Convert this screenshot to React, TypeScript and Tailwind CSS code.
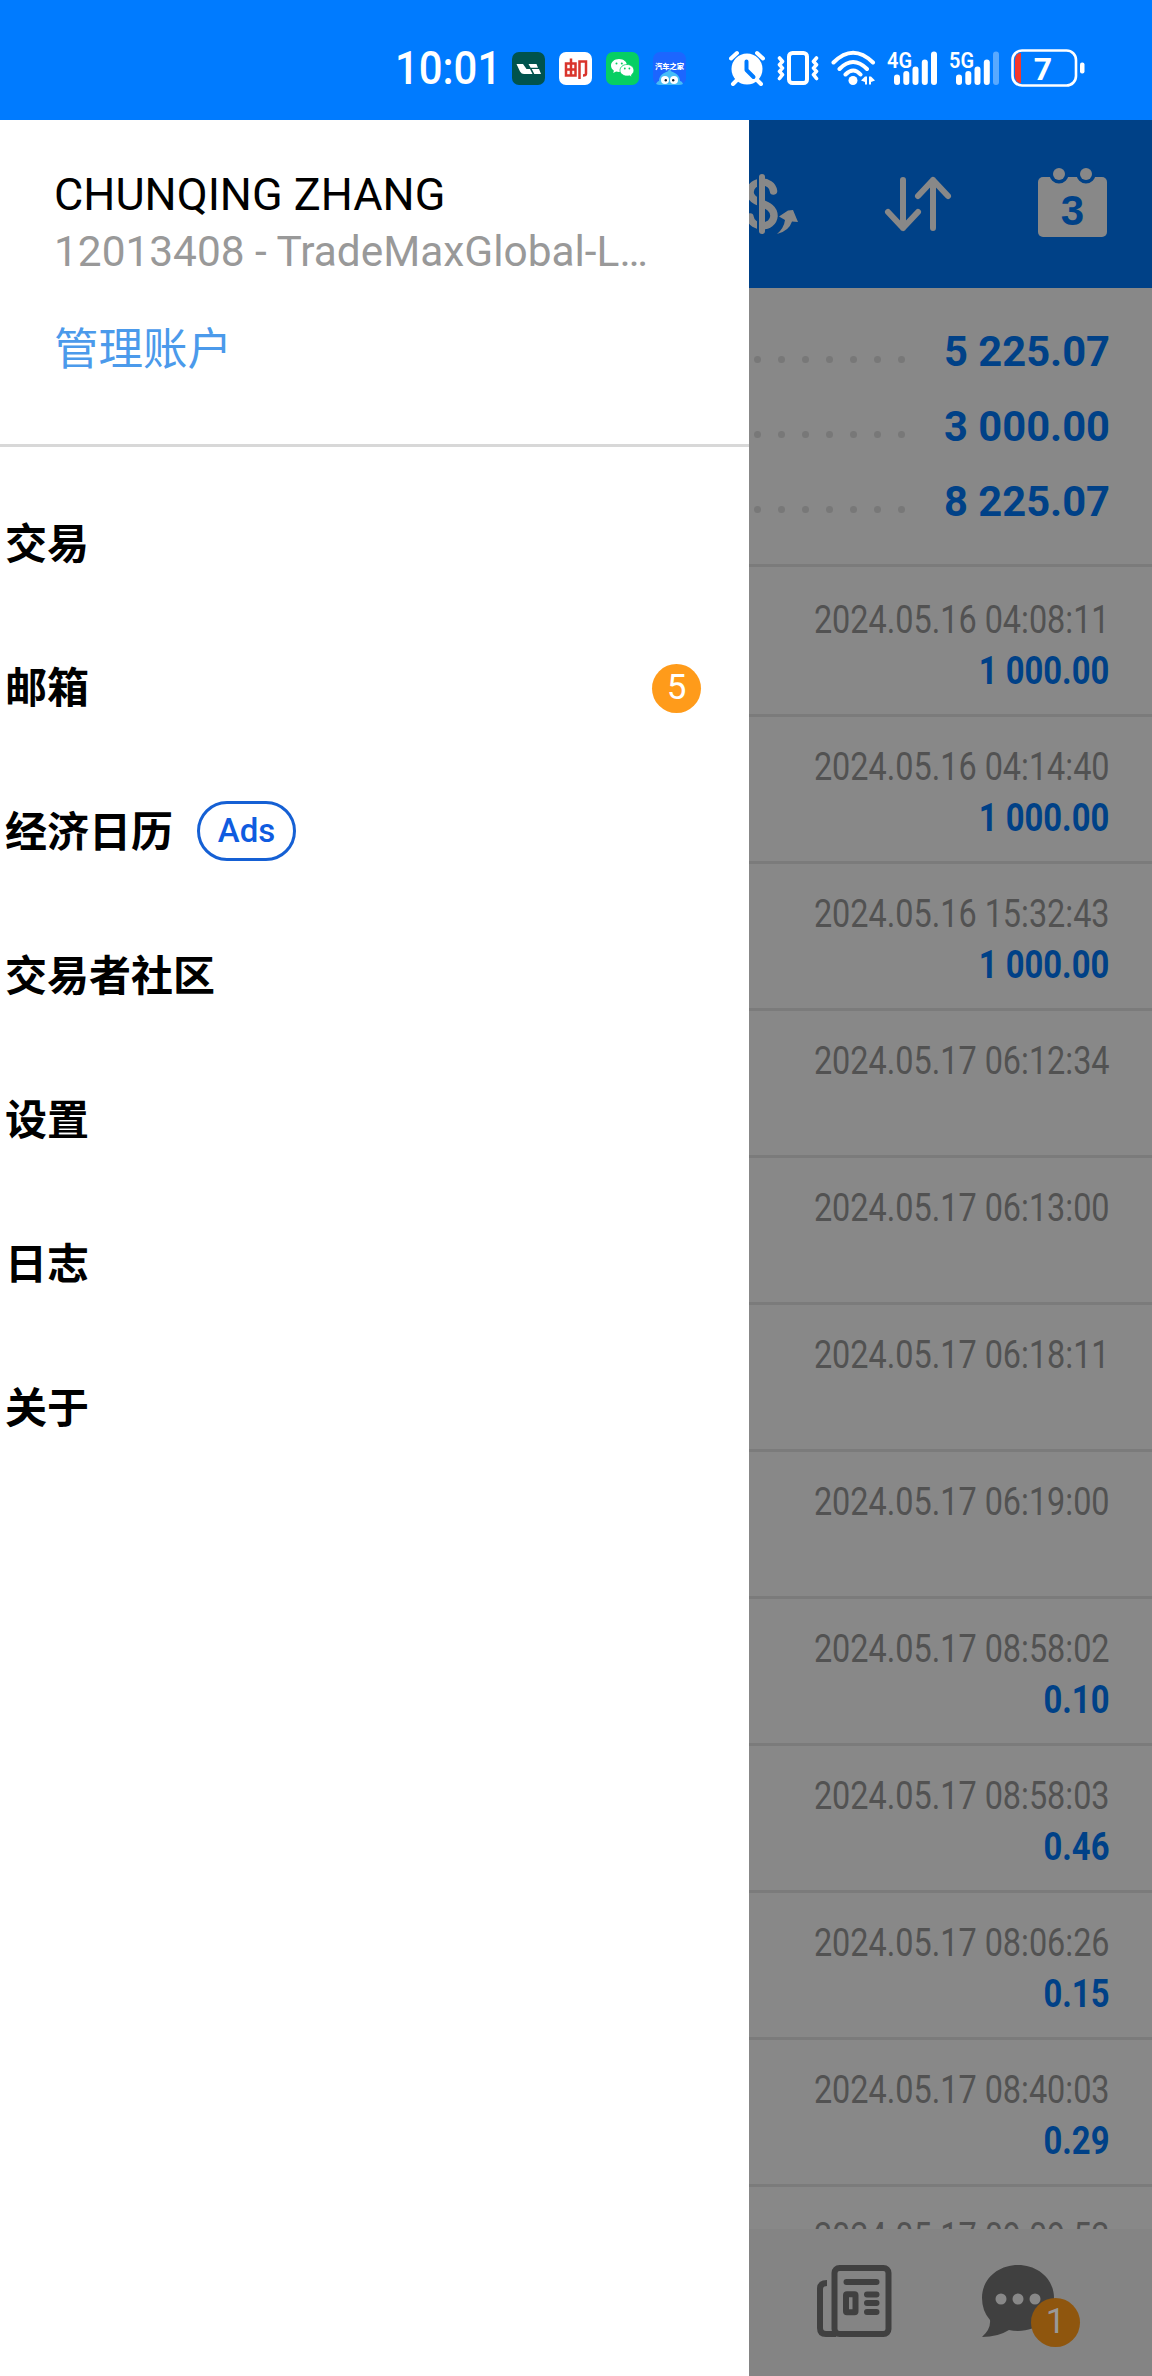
import type { ReactNode } from 'react'

const SUMMARY = ['5 225.07', '3 000.00', '8 225.07']

const HISTORY = [
  { time: '2024.05.16 04:08:11', amount: '1 000.00' },
  { time: '2024.05.16 04:14:40', amount: '1 000.00' },
  { time: '2024.05.16 15:32:43', amount: '1 000.00' },
  { time: '2024.05.17 06:12:34' },
  { time: '2024.05.17 06:13:00' },
  { time: '2024.05.17 06:18:11' },
  { time: '2024.05.17 06:19:00' },
  { time: '2024.05.17 08:58:02', amount: '0.10' },
  { time: '2024.05.17 08:58:03', amount: '0.46' },
  { time: '2024.05.17 08:06:26', amount: '0.15' },
  { time: '2024.05.17 08:40:03', amount: '0.29' },
  { time: '2024.05.17 09:09:52' },
]

const MENU: { label: string; extra?: ReactNode }[] = [
  { label: '交易' },
  {
    label: '邮箱',
    extra: (
      <span className="mt-0.5 mr-12 ml-auto flex size-[49px] items-center justify-center rounded-full bg-[#ff9b1a] font-['Roboto',sans-serif] text-[35px] font-normal text-white">
        5
      </span>
    ),
  },
  {
    label: '经济日历',
    extra: (
      <span className="ml-6 flex h-[60px] w-[99px] items-center justify-center rounded-full border-3 border-[#1560d4] font-['Roboto',sans-serif] text-[33px] font-medium text-[#0f5ce0]">
        Ads
      </span>
    ),
  },
  { label: '交易者社区' },
  { label: '设置' },
  { label: '日志' },
  { label: '关于' },
]

function AppIcons() {
  return (
    <div className="ml-[17px] flex gap-[14px]">
      {/* Li Auto */}
      <svg width="33" height="33" viewBox="0 0 33 33">
        <rect width="33" height="33" rx="7" fill="#00534d" />
        <path d="M4.500 12H11l3.500 5H18l2.500 5h-8.500q-2.500 0-4-2.500z" fill="#fff" />
        <path d="M16.500 12h8l1.500 3.800h-7.300z M19.800 17h7.200l2 5h-6.700z" fill="#fff" />
      </svg>
      {/* Postal savings */}
      <svg width="33" height="33" viewBox="0 0 33 33">
        <rect width="33" height="33" rx="7" fill="#fff" />
        <path d="M7 11.500h9.500v12H7zM12 6.500v17M7 17.500h9.500M20.500 27V9.500h6.500v12q0 2-3 2" fill="none" stroke="#d9342b" strokeWidth="2.500" />
      </svg>
      {/* WeChat */}
      <svg width="33" height="33" viewBox="0 0 33 33">
        <rect width="33" height="33" rx="7" fill="#06cf63" />
        <path d="M13 7c-4.600 0-8 2.900-8 6.600 0 2.100 1.100 3.900 2.900 5.100l-.7 2.400 2.900-1.500q1.400.4 2.900.4c4.600 0 8-2.900 8-6.500S17.600 7 13 7z" fill="#fff" />
        <path d="M21 12.500c-4 0-7 2.600-7 5.800s3 5.800 7 5.800q1.300 0 2.400-.3l2.500 1.300-.6-2.100c1.600-1.100 2.600-2.800 2.600-4.700 0-3.200-3-5.800-6.900-5.800z" fill="#fff" stroke="#06cf63" strokeWidth=".8" />
        <circle cx="10.500" cy="11.500" r="1" fill="#06cf63" />
        <circle cx="15.800" cy="11.500" r="1" fill="#06cf63" />
        <circle cx="18.800" cy="16.500" r=".9" fill="#06cf63" />
        <circle cx="23.400" cy="16.500" r=".9" fill="#06cf63" />
      </svg>
      {/* Autohome */}
      <svg className="overflow-visible" width="33" height="33" viewBox="0 0 33 33">
        <rect width="33" height="33" rx="7" fill="#1c66ff" />
        <text x="16.500" y="16.500" textAnchor="middle" fontSize="7.300" fontWeight="900" fill="#fff" fontFamily="Noto Sans CJK SC, sans-serif">
          汽车之家
        </text>
        <path d="M3 32c1-2 2-3 3-3 0-6 5-8 8.500-9.500L16.500 17l2 2.500C22 21 27 23 27 29c1 0 2.500 1 3 3q-2 1-4 1H7q-2 0-4-1z" fill="#45bdf7" />
        <circle cx="12" cy="28" r="4" fill="#fff" />
        <circle cx="21" cy="28" r="4" fill="#fff" />
        <circle cx="12.800" cy="28.300" r="1.200" fill="#123" />
        <circle cx="20.200" cy="28.300" r="1.200" fill="#123" />
      </svg>
    </div>
  )
}

function Signal({ label, weak }: { label: string; weak?: boolean }) {
  return (
    <svg className="overflow-visible" width="50" height="36" viewBox="0 0 50 36" fill="#fff">
      <text x="0" y="17.500" fontSize="22.500" fontWeight="600" textLength="25" lengthAdjust="spacingAndGlyphs" fontFamily="Roboto, sans-serif">
        {label}
      </text>
      <rect x="7" y="24.500" width="6" height="10.500" rx="3" />
      <rect x="16.300" y="21" width="6" height="14" rx="3" />
      <rect x="25.500" y="16.500" width="6" height="18.500" rx="3" />
      <rect x="34.800" y="9.500" width="6" height="25.500" rx="3" />
      <rect x="44" y="1.500" width="6" height="33.500" rx="3" opacity={weak ? 0.35 : 1} />
    </svg>
  )
}

function StatusIcons() {
  return (
    <div className="flex items-center">
      {/* Alarm */}
      <svg className="ml-[43px]" width="36" height="36" viewBox="0 0 36 36">
        <circle cx="18" cy="19" r="15.500" fill="#fff" />
        <path d="M2 8.500 8 3M34 8.500 28 3M8 30l-4 4M28 30l4 4" stroke="#fff" strokeWidth="4" strokeLinecap="round" />
        <path d="M17.500 11.500v8.500l7 7" stroke="#007bff" strokeWidth="4" strokeLinecap="round" strokeLinejoin="round" fill="none" />
      </svg>
      {/* Vibrate */}
      <svg className="ml-3" width="42" height="36" viewBox="0 0 42 36" fill="none" stroke="#fff" strokeLinecap="round" strokeLinejoin="round">
        <rect x="12" y="3" width="18" height="30" rx="3.500" strokeWidth="4" />
        <path d="m2.500 8 3 3.500-3 3.300 3 3.300-3 3.300 3 3.300-3 3.800M39.500 8l-3 3.500 3 3.300-3 3.300 3 3.300-3 3.300 3 3.800" strokeWidth="3.600" />
      </svg>
      {/* Wi-Fi */}
      <svg className="ml-3" width="45" height="36" viewBox="0 0 45 36" fill="none" stroke="#fff" strokeWidth="4" strokeLinecap="round">
        <path d="M2.500 12.500Q22-7 42 12.500M8.500 19Q22 5 36 19M14.500 24.500q8-8 15 0" />
        <circle cx="22" cy="30.500" r="4.500" fill="#fff" stroke="none" />
        <path d="M36 26.500v8h-2v-2.500l-4-1.500 4-4zM38 26.500v8h2v-2.500l4-1.500-4-4z" fill="#fff" stroke="none" />
      </svg>
      <div className="ml-[11px] flex gap-3">
        <Signal label="4G" />
        <Signal label="5G" weak />
      </div>
      {/* Battery */}
      <svg className="ml-3" width="74" height="38" viewBox="0 0 74 38">
        <path d="M10 4v30Q4 34 4 26V12Q4 4 10 4z" fill="#f5382b" />
        <rect x="1.500" y="1.500" width="63.500" height="35" rx="9.500" fill="none" stroke="#fff" strokeWidth="2.600" />
        <rect x="69" y="13.500" width="4.500" height="11" rx="2" fill="#fff" />
        <text x="32" y="30.500" textAnchor="middle" fontSize="32" fontWeight="700" fill="#fff" fontFamily="Roboto, sans-serif">
          7
        </text>
      </svg>
    </div>
  )
}

function StatusBar() {
  return (
    <header className="flex h-[120px] shrink-0 items-center bg-[#007bff] pt-4 pl-[395px] text-white">
      <div className="flex items-center">
        <span className="w-[100px] origin-left scale-x-91 text-[46px] leading-[34px] font-medium">10:01</span>
        <AppIcons />
        <StatusIcons />
      </div>
    </header>
  )
}

function Drawer() {
  return (
    <aside className="w-[749px] shrink-0 bg-white">
      <div className="h-[327px] border-b-3 border-[#d8d8d8] pt-[48px] pl-[54px]">
        <p className="text-[45px] leading-[54px] whitespace-nowrap text-black">CHUNQING ZHANG</p>
        <p className="mt-px text-[42.400px] leading-[58px] whitespace-nowrap text-[#999]">12013408 - TradeMaxGlobal-L…</p>
        <p className="mt-[35px] font-['Noto_Sans_CJK_SC',sans-serif] text-[44.500px] leading-[60px] text-[#4b9aeb]">管理账户</p>
      </div>
      <nav className="pt-6">
        {MENU.map((item) => (
          <div
            key={item.label}
            className="flex h-36 items-center pl-[5px] font-['Noto_Sans_CJK_SC',sans-serif] text-[42px] font-bold text-black"
          >
            <span className="pb-1.5">{item.label}</span>
            {item.extra}
          </div>
        ))}
      </nav>
    </aside>
  )
}

function Toolbar() {
  return (
    <div className="flex h-[168px] shrink-0 bg-[#004187] pt-12">
      {/* Currency */}
      <svg width="50" height="72" viewBox="0 0 50 72" fill="none" stroke="#888" strokeLinecap="round">
        <path d="M24.500 23C23 11 2 11 1 24c0 13 24 9 24 24C24 61 3 61 1 49" strokeWidth="7.500" />
        <path d="M12 9v54" stroke="#004187" strokeWidth="8" strokeLinecap="butt" />
        <path d="M13 9v54" strokeWidth="6" />
        <path d="M30 48.500l9-6 5-.5 5 12-6-.5Q40 63 28 66q7-6 8-14z" fill="#888" stroke="none" />
      </svg>
      {/* Sort */}
      <svg className="ml-[83px]" width="74" height="72" viewBox="0 0 74 72" fill="none" stroke="#888" strokeWidth="6" strokeLinecap="round" strokeLinejoin="round">
        <path d="M21 12v48M6 44l15 16 15-16M51 60V12M36 28l15-16 15 16" />
      </svg>
      {/* Calendar */}
      <svg className="ml-[82px]" width="69" height="72" viewBox="0 0 69 72">
        <rect y="9" width="69" height="60" rx="5" fill="#888" />
        <path d="M21 6v0M48 6v0" stroke="#004187" strokeWidth="19" strokeLinecap="round" />
        <circle cx="21" cy="6" r="6" fill="#888" />
        <circle cx="48" cy="6" r="6" fill="#888" />
        <text x="34.500" y="57" textAnchor="middle" fontSize="42" fontWeight="700" fill="#004187" fontFamily="Liberation Sans, sans-serif">
          3
        </text>
      </svg>
    </div>
  )
}

function TabBar() {
  return (
    <div className="flex h-[147px] shrink-0 bg-[#848484] pt-9 pl-[67px]">
      {/* News */}
      <svg width="76" height="72" viewBox="0 0 76 72" fill="none" stroke="#404040" strokeWidth="6" strokeLinecap="round">
        <rect x="18.500" y="3" width="54" height="66" rx="5" />
        <path d="M11 18q-7 0-7 6v39q0 6 6 6h10" strokeLinecap="butt" />
        <path d="M30.500 17h30M51 29.500h9.500M51 38h9.500M51 47h9.500" />
        <rect x="30" y="29.300" width="9.500" height="18" rx="1" />
      </svg>
      {/* Messages */}
      <div className="relative ml-[90px] h-[72px] w-[72px]">
        <svg width="72" height="72" viewBox="0 0 72 72" fill="#404040">
          <path d="M36 0c20 0 36 14 36 33S56 66 36 66q-5 0-9-1-11 7-27 7 9-8 8-17Q0 46 0 33C0 14 16 0 36 0z" />
          <circle cx="19" cy="34" r="5.500" fill="#888" />
          <circle cx="36" cy="34" r="5.500" fill="#888" />
          <circle cx="53" cy="34" r="5.500" fill="#888" />
        </svg>
        <span className="absolute top-[33px] left-[49px] flex size-[49px] items-center justify-center rounded-full bg-[#8f560e] text-[35px] text-[#999]">
          1
        </span>
      </div>
    </div>
  )
}

function HistoryPane() {
  return (
    <main className="flex min-w-0 flex-1 flex-col bg-[#888]">
      <Toolbar />
      <div className="h-[279px] shrink-0 border-b-3 border-[#7b7b7b] pt-[27px] pr-[42px]">
        {SUMMARY.map((value) => (
          <div key={value} className="flex h-[75px] items-center">
            <div className="mt-3.5 ml-[5px] flex gap-[17px]">
              {Array.from({ length: 7 }, (_, i) => (
                <i key={i} className="size-[7px] rounded-full bg-[#787878]" />
              ))}
            </div>
            <span className="ml-auto text-[41.700px] font-bold whitespace-nowrap text-[#004187]">{value}</span>
          </div>
        ))}
      </div>
      <div className="min-h-0 flex-1 overflow-hidden pt-[3px]">
        {HISTORY.map((row) => (
          <div
            key={row.time}
            className="flex h-[147px] flex-col items-end border-b-3 border-[#7b7b7b] pt-[25px] pr-[42px] text-[39.500px] leading-[50px] whitespace-nowrap"
          >
            <span className="origin-right scale-x-82 text-[#525252]">{row.time}</span>
            {row.amount && (
              <span className="mt-px mr-px origin-right scale-x-83 font-bold text-[#004187]">{row.amount}</span>
            )}
          </div>
        ))}
      </div>
      <TabBar />
    </main>
  )
}

export default function App() {
  return (
    <div className="flex h-[2376px] w-[1152px] flex-col overflow-hidden bg-white font-['Roboto','Noto_Sans_CJK_SC',sans-serif]">
      <StatusBar />
      <div className="flex min-h-0 flex-1">
        <Drawer />
        <HistoryPane />
      </div>
    </div>
  )
}
